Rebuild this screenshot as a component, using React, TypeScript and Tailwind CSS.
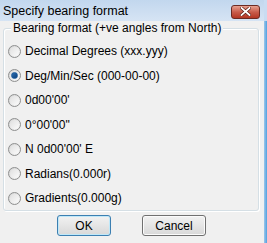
import { useState } from 'react';

const options = [
  'Decimal Degrees (xxx.yyy)',
  'Deg/Min/Sec (000-00-00)',
  "0d00'00'",
  '0°00\'00"',
  "N 0d00'00' E",
  'Radians(0.000r)',
  'Gradients(0.000g)',
];

function Radio({ checked }: { checked: boolean }) {
  return (
    <span className="relative w-[13px] h-[13px] rounded-full border border-[#8e8f8f] bg-gradient-to-br from-[#d4d4d4] to-[#f8f8f8] flex items-center justify-center shrink-0">
      <span className="w-[9px] h-[9px] rounded-full bg-gradient-to-br from-[#e0e0e0] to-[#fbfbfb] flex items-center justify-center">
        {checked && <span className="w-[7px] h-[7px] rounded-full bg-gradient-to-br from-[#2a6fb3] to-[#0b3e7a] border border-[#1c5a99]" />}
      </span>
    </span>
  );
}

export default function App() {
  const [sel, setSel] = useState(1);
  return (
    <div className="w-[267px] h-[243px] flex flex-col bg-[#f0f0f0] overflow-hidden" style={{ fontFamily: '"Liberation Sans", Arial, sans-serif' }}>
      <div className="flex h-[21px] shrink-0">
        <div className="flex-1 flex items-center justify-between bg-gradient-to-b from-[#c2d7ee] to-[#d6e4f4] pl-[3px] pr-[4px] pt-[1px]">
          <span className="text-[12.5px] text-black leading-none">Specify bearing format</span>
          <button className="w-[29px] h-[14px] mt-[1px] rounded-[3px] border border-[#6b2b24] bg-gradient-to-b from-[#e7a191] via-[#c85c4b] to-[#b33522] flex items-center justify-center">
            <svg width="11" height="9" viewBox="0 0 11 9">
              <path d="M1.5 1 L9.5 8 M9.5 1 L1.5 8" stroke="#5a1a12" strokeWidth="3.2" strokeLinecap="square" />
              <path d="M1.5 1 L9.5 8 M9.5 1 L1.5 8" stroke="#ffffff" strokeWidth="1.8" strokeLinecap="square" />
            </svg>
          </button>
        </div>
        <div className="w-[3px] bg-[#c9dcf2]" />
      </div>
      <div className="flex flex-1">
        <div className="flex-1 flex flex-col pl-[3px] pr-[5px]">
          <div className="relative mt-[7px] h-[183px] border border-[#d5dfe5] rounded-[3px] shadow-[inset_1px_1px_0_#ffffff,1px_1px_0_#ffffff]">
            <span className="absolute -top-[7px] left-[7px] bg-[#f0f0f0] px-[2px] text-[12px] leading-[13px] text-black">
              Bearing format (+ve angles from North)
            </span>
            <div className="flex flex-col pt-[10px] pl-[4px]">
              {options.map((o, i) => (
                <label key={o} onClick={() => setSel(i)} className="flex items-center gap-[4px] h-[24.5px] text-[12px] text-black">
                  <Radio checked={sel === i} />
                  <span>{o}</span>
                </label>
              ))}
            </div>
          </div>
          <div className="flex gap-[31px] pl-[54px] mt-[4px]">
            <button className="w-[54px] h-[21px] rounded-[3px] border border-[#3c7fb1] bg-gradient-to-b from-[#f2f2f2] to-[#d8d8d8] shadow-[inset_0_0_0_1px_#bfe8f9] text-[12px] text-black">
              OK
            </button>
            <button className="w-[64px] h-[21px] rounded-[3px] border border-[#707070] bg-gradient-to-b from-[#f2f2f2] to-[#d8d8d8] shadow-[inset_0_0_0_1px_#fbfbfb] text-[12px] text-black">
              Cancel
            </button>
          </div>
        </div>
        <div className="w-[3px] bg-gradient-to-r from-[#9cc6ea] to-[#4fa1df]" />
      </div>
    </div>
  );
}
